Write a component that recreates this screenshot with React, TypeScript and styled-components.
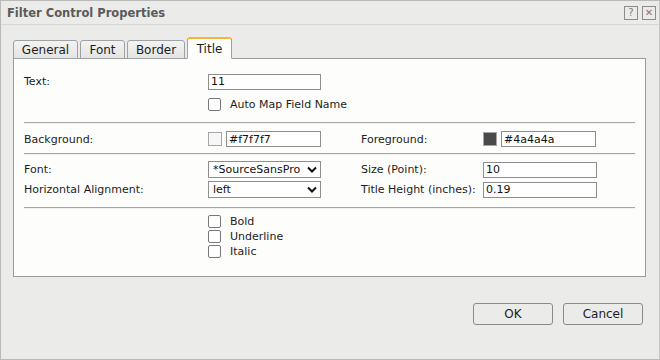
import React from "react";
import styled, { createGlobalStyle } from "styled-components";

const GlobalStyle = createGlobalStyle`
  html, body {
    margin: 0;
    padding: 0;
    background: #ebecea;
  }
  * {
    box-sizing: border-box;
  }
`;

const Dialog = styled.div`
  width: 660px;
  height: 360px;
  display: flex;
  flex-direction: column;
  background: #ebecea;
  border-left: 1px solid #b9bab8;
  border-top: 1px solid #b9bab8;
  border-right: 1px solid #c8c9c7;
  border-bottom: 1px solid #b9bab8;
  font-family: "DejaVu Sans", Verdana, sans-serif;
  font-size: 11px;
  color: #1c1c1c;
`;

const TitleBar = styled.div`
  height: 24px;
  flex: none;
  display: flex;
  align-items: center;
  padding: 0 3px 0 6px;
  border-bottom: 1px solid #d6d7d4;
`;

const TitleText = styled.div`
  flex: 1;
  font-family: "DejaVu Sans", Verdana, sans-serif;
  font-weight: bold;
  font-size: 11.5px;
  color: #5a5a5a;
`;

const TitleButton = styled.div`
  width: 14px;
  height: 14px;
  margin-left: 4px;
  border: 1px solid #8c8c8c;
  display: flex;
  align-items: center;
  justify-content: center;
  color: #7a7a7a;
  font-size: 10px;
  line-height: 1;
`;

const Body = styled.div`
  flex: 1;
  display: flex;
  flex-direction: column;
  padding: 12px 13px 0 12px;
`;

const TabRow = styled.div`
  display: flex;
  align-items: flex-end;
  gap: 2px;
  height: 21px;
  position: relative;
  z-index: 1;
`;

const Tab = styled.div<{ $active?: boolean; $w: number }>`
  width: ${(p) => p.$w}px;
  height: ${(p) => (p.$active ? 22 : 19)}px;
  display: flex;
  align-items: center;
  justify-content: center;
  font-size: 12px;
  border: 1px solid #9ca2a6;
  border-bottom: ${(p) => (p.$active ? "1px solid #fdfefc" : "1px solid #9ca2a6")};
  border-top: ${(p) => (p.$active ? "2px solid #f6b53c" : "1px solid #9ca2a6")};
  border-radius: 3px 3px 0 0;
  background: ${(p) => (p.$active ? "#fdfefc" : "linear-gradient(#f3f4f2, #e4e5e3)")};
  color: #1c1c1c;
  margin-bottom: -1px;
`;

const Panel = styled.div`
  height: 219px;
  background: #fdfefc;
  border: 1px solid #9a9c9a;
  padding: 14px 10px 0 10px;
  display: flex;
  flex-direction: column;
`;

const Row = styled.div<{ $h: number }>`
  display: grid;
  grid-template-columns: 184px 153px 122px 1fr;
  align-items: center;
  height: ${(p) => p.$h}px;
`;

const Label = styled.div`
  white-space: nowrap;
`;

const Field = styled.div`
  display: flex;
  align-items: center;
  gap: 4px;
`;

const TextBox = styled.div<{ $w: number }>`
  width: ${(p) => p.$w}px;
  height: 16px;
  border: 1px solid #8e8e8e;
  background: #ffffff;
  padding: 0 2px;
  display: flex;
  align-items: center;
  font-size: 11px;
  color: #111;
`;

const Swatch = styled.div<{ $color: string }>`
  width: 14px;
  height: 14px;
  border: 1px solid #a5a5a5;
  background: ${(p) => p.$color};
`;

const Select = styled.div`
  width: 113px;
  height: 17px;
  border: 1px solid #8e8e8e;
  background: #ffffff;
  padding: 0 3px 0 4px;
  display: flex;
  align-items: center;
  justify-content: space-between;
  font-size: 11px;
  color: #111;
  overflow: hidden;
  white-space: nowrap;
`;

const Separator = styled.div<{ $mt: number; $mb: number }>`
  margin: ${(p) => p.$mt}px 0 ${(p) => p.$mb}px 0;
  border-top: 1px solid #a6a6a6;
  border-bottom: 1px solid #f2f2f0;
`;

const CheckRow = styled.label`
  grid-column: 2 / span 3;
  display: flex;
  align-items: center;
  gap: 9px;
`;

const Box = styled.span`
  width: 13px;
  height: 13px;
  border: 1px solid #787878;
  border-radius: 2px;
  background: #fff;
  flex: none;
`;

const Footer = styled.div`
  flex: 1;
  display: flex;
  justify-content: flex-end;
  align-items: center;
  gap: 10px;
  padding: 0 3px 8px 0;
`;

const Button = styled.div`
  width: 80px;
  height: 22px;
  border: 1px solid #8a8a8a;
  border-radius: 3px;
  display: flex;
  align-items: center;
  justify-content: center;
  font-size: 12px;
  color: #1c1c1c;
`;

const Chevron = () => (
  <svg width="10" height="7" viewBox="0 0 10 7">
    <path d="M1 1.5 L5 5.5 L9 1.5" fill="none" stroke="#111" strokeWidth="2" />
  </svg>
);

const Check: React.FC<{ text?: string }> = ({ text }) => (
  <CheckRow>
    <Box />
    {text}
  </CheckRow>
);

const App: React.FC = () => {
  return (
    <>
      <GlobalStyle />
      <Dialog>
        <TitleBar>
          <TitleText>Filter Control Properties</TitleText>
          <TitleButton>?</TitleButton>
          <TitleButton>✕</TitleButton>
        </TitleBar>
        <Body>
          <TabRow>
            <Tab $w={65}>General</Tab>
            <Tab $w={45}>Font</Tab>
            <Tab $w={58}>Border</Tab>
            <Tab $w={45} $active>Title</Tab>
          </TabRow>
          <Panel>
            <Row $h={17}>
              <Label>Text:</Label>
              <Field>
                <TextBox $w={113}>11</TextBox>
              </Field>
            </Row>
            <Row $h={13} style={{ marginTop: 8 }}>
              <Check text="Auto Map Field Name" />
            </Row>
            <Separator $mt={11} $mb={7} />
            <Row $h={16}>
              <Label>Background:</Label>
              <Field>
                <Swatch $color="#f7f7f7" />
                <TextBox $w={95}>#f7f7f7</TextBox>
              </Field>
              <Label>Foreground:</Label>
              <Field>
                <Swatch $color="#4a4a4a" />
                <TextBox $w={95}>#4a4a4a</TextBox>
              </Field>
            </Row>
            <Separator $mt={6} $mb={6} />
            <Row $h={17}>
              <Label>Font:</Label>
              <Select>
                *SourceSansPro
                <Chevron />
              </Select>
              <Label>Size (Point):</Label>
              <TextBox $w={114}>10</TextBox>
            </Row>
            <Row $h={17} style={{ marginTop: 3 }}>
              <Label>Horizontal Alignment:</Label>
              <Select>
                left
                <Chevron />
              </Select>
              <Label>Title Height (inches):</Label>
              <TextBox $w={114}>0.19</TextBox>
            </Row>
            <Separator $mt={9} $mb={5} />
            <Row $h={15}>
              <Check text="Bold" />
            </Row>
            <Row $h={15}>
              <Check text="Underline" />
            </Row>
            <Row $h={15}>
              <Check text="Italic" />
            </Row>
          </Panel>
          <Footer>
            <Button>OK</Button>
            <Button>Cancel</Button>
          </Footer>
        </Body>
      </Dialog>
    </>
  );
};

export default App;
